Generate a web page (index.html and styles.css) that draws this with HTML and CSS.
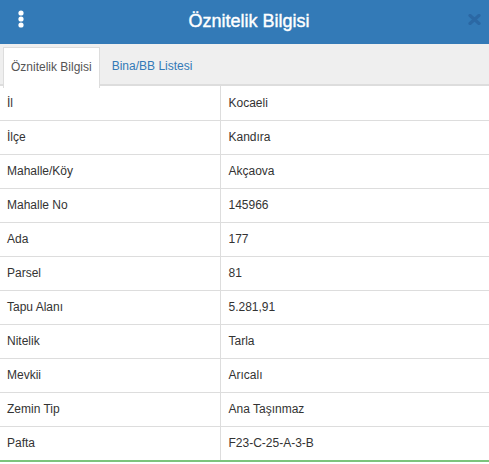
FILE: index.html
```html
<!DOCTYPE html>
<html lang="tr">
<head>
  <meta charset="UTF-8" />
  <title>Öznitelik Bilgisi</title>
  <link rel="stylesheet" href="styles.css">
</head>
<body>
  <div class="panel">
    <div class="baslik">
      <span class="menu">
        <svg width="8" height="18" viewBox="0 0 8 18"><circle cx="4" cy="3" r="2.6" fill="#fff"/><circle cx="4" cy="9" r="2.6" fill="#fff"/><circle cx="4" cy="15" r="2.6" fill="#fff"/></svg>
      </span>
      <h1>Öznitelik Bilgisi</h1>
      <span class="kapat">
        <svg width="13" height="11" viewBox="0 0 13 11"><path d="M2 1.5 L11 9.5 M11 1.5 L2 9.5" stroke="#2a64a0" stroke-width="3.2" stroke-linecap="round"/></svg>
      </span>
    </div>

    <ul class="sekmeler">
      <li class="aktif">Öznitelik Bilgisi</li>
      <li>Bina/BB Listesi</li>
    </ul>

    <table class="bilgi">
      <tr><td>İl</td><td>Kocaeli</td></tr>
      <tr><td>İlçe</td><td>Kandıra</td></tr>
      <tr><td>Mahalle/Köy</td><td>Akçaova</td></tr>
      <tr><td>Mahalle No</td><td>145966</td></tr>
      <tr><td>Ada</td><td>177</td></tr>
      <tr><td>Parsel</td><td>81</td></tr>
      <tr><td>Tapu Alanı</td><td>5.281,91</td></tr>
      <tr><td>Nitelik</td><td>Tarla</td></tr>
      <tr><td>Mevkii</td><td>Arıcalı</td></tr>
      <tr><td>Zemin Tip</td><td>Ana Taşınmaz</td></tr>
      <tr><td>Pafta</td><td>F23-C-25-A-3-B</td></tr>
    </table>
    <div class="alt"></div>
  </div>
</body>
</html>
```

FILE: styles.css
```css
* { margin: 0; padding: 0; box-sizing: border-box; }

body {
  font-family: 'Liberation Sans', Arial, sans-serif;
  font-size: 12px;
  color: #333;
  background: #fff;
  overflow: hidden;
}

.panel {
  width: 489px;
}

.baslik {
  height: 44px;
  background: #337ab7;
  display: flex;
  align-items: center;
  padding: 0 8px 0 17px;
}

.baslik h1 {
  font-size: 18px;
  font-weight: normal;
  -webkit-text-stroke: 0.4px #fff;
  color: #fff;
  flex: 1;
  text-align: center;
  margin-top: -2px;
}

.menu,
.kapat {
  width: 20px;
  display: flex;
  align-items: center;
}

.menu {
  margin-top: -6px;
}

.kapat {
  justify-content: flex-end;
  opacity: 0.8;
  margin-top: -6px;
}

.sekmeler {
  list-style: none;
  display: flex;
  background: #efefef;
  height: 42px;
  padding: 3px 0 0 3px;
  border-bottom: 2px solid #ddd;
}

.sekmeler li {
  padding: 0 11px 0 12px;
  height: 39px;
  line-height: 38px;
  color: #337ab7;
}

.sekmeler li.aktif {
  background: #fff;
  color: #555;
  border: 1px solid #ddd;
  border-bottom: none;
  padding: 0 7px;
  margin-bottom: -2px;
  height: 41px;
}

.bilgi {
  width: 100%;
  border-collapse: collapse;
}

.bilgi td {
  height: 34px;
  padding: 0 8px;
  border-bottom: 1px solid #ddd;
  vertical-align: middle;
}

.bilgi td:first-child {
  width: 220px;
  padding-left: 7px;
  border-right: 1px solid #ddd;
}

.bilgi tr:last-child td {
  border-bottom: none;
}

.alt {
  height: 3px;
  border-top: 2px solid #7cc47c;
}
```
